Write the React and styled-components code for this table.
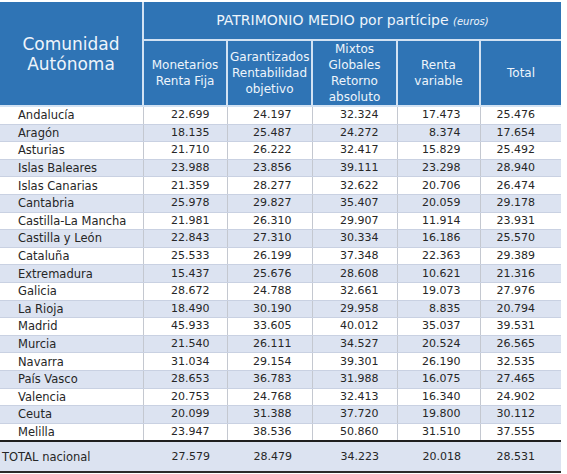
import styled, { createGlobalStyle } from "styled-components";

const GlobalStyle = createGlobalStyle`
  body {
    margin: 0;
    background: #ffffff;
    font-family: "DejaVu Sans", "Liberation Sans", sans-serif;
  }
`;

const Page = styled.div`
  padding-top: 2px;
`;

const Table = styled.table`
  width: 561px;
  table-layout: fixed;
  border-collapse: collapse;
  color: #262626;
`;

const HeadCell = styled.th`
  background: #2f74b5;
  color: #eef4fb;
  font-weight: normal;
  text-align: center;
  vertical-align: middle;
  border: 2px solid #d2e2f3;
  border-top: none;
  font-size: ${(p) => p.$size || 12}px;
  line-height: ${(p) => p.$lh || 16}px;
  height: ${(p) => p.$h || "auto"};
  padding: 0 2px;

  &:first-child {
    border-left: none;
  }
  &:last-child {
    border-right: none;
  }
`;

const Units = styled.span`
  font-style: italic;
  font-size: 10px;
`;

const Row = styled.tr`
  background: ${(p) => (p.$odd ? "#dce3f1" : "#ffffff")};
`;

const NameCell = styled.td`
  height: 16.6px;
  padding: 0 0 0 18px;
  font-size: 11.5px;
  line-height: 14px;
  border-bottom: 1px solid #c9d1e2;
  border-right: 1px solid #c4c8d0;
  white-space: nowrap;
`;

const NumCell = styled.td`
  padding: 0 ${(p) => p.$pad || 18}px 0 0;
  text-align: right;
  font-size: 11px;
  line-height: 14px;
  border-bottom: 1px solid #c9d1e2;
  border-right: 1px solid #c4c8d0;

  &:last-child {
    border-right: none;
  }
`;

const TotalRow = styled.tr`
  background: #dce3f1;

  td {
    height: 27px;
    border-top: 2px solid #1f1f1f;
    border-bottom: 2px solid #2b2b2b;
    border-right: none;
  }
`;

const TotalName = styled.td`
  padding-left: 2px;
  font-size: 11.5px;
  white-space: nowrap;
`;

const pads = [17, 20, 18, 19, 26];

const rows = [
  ["Andalucía", "22.699", "24.197", "32.324", "17.473", "25.476"],
  ["Aragón", "18.135", "25.487", "24.272", "8.374", "17.654"],
  ["Asturias", "21.710", "26.222", "32.417", "15.829", "25.492"],
  ["Islas Baleares", "23.988", "23.856", "39.111", "23.298", "28.940"],
  ["Islas Canarias", "21.359", "28.277", "32.622", "20.706", "26.474"],
  ["Cantabria", "25.978", "29.827", "35.407", "20.059", "29.178"],
  ["Castilla-La Mancha", "21.981", "26.310", "29.907", "11.914", "23.931"],
  ["Castilla y León", "22.843", "27.310", "30.334", "16.186", "25.570"],
  ["Cataluña", "25.533", "26.199", "37.348", "22.363", "29.389"],
  ["Extremadura", "15.437", "25.676", "28.608", "10.621", "21.316"],
  ["Galicia", "28.672", "24.788", "32.661", "19.073", "27.976"],
  ["La Rioja", "18.490", "30.190", "29.958", "8.835", "20.794"],
  ["Madrid", "45.933", "33.605", "40.012", "35.037", "39.531"],
  ["Murcia", "21.540", "26.111", "34.527", "20.524", "26.565"],
  ["Navarra", "31.034", "29.154", "39.301", "26.190", "32.535"],
  ["País Vasco", "28.653", "36.783", "31.988", "16.075", "27.465"],
  ["Valencia", "20.753", "24.768", "32.413", "16.340", "24.902"],
  ["Ceuta", "20.099", "31.388", "37.720", "19.800", "30.112"],
  ["Melilla", "23.947", "38.536", "50.860", "31.510", "37.555"],
];

const total = ["TOTAL nacional", "27.579", "28.479", "34.223", "20.018", "28.531"];

const App = () => {
  return (
    <Page>
      <GlobalStyle />
      <Table>
        <colgroup>
          <col style={{ width: 143 }} />
          <col style={{ width: 84 }} />
          <col style={{ width: 85 }} />
          <col style={{ width: 85 }} />
          <col style={{ width: 83 }} />
          <col style={{ width: 81 }} />
        </colgroup>
        <thead>
          <tr>
            <HeadCell rowSpan={2} $size={17} $lh={20}>
              Comunidad
              <br />
              Autónoma
            </HeadCell>
            <HeadCell colSpan={5} $size={14} $h="37px">
              PATRIMONIO MEDIO por partícipe <Units>(euros)</Units>
            </HeadCell>
          </tr>
          <tr>
            <HeadCell $h="62px">
              Monetarios
              <br />
              Renta Fija
            </HeadCell>
            <HeadCell>
              Garantizados
              <br />
              Rentabilidad
              <br />
              objetivo
            </HeadCell>
            <HeadCell>
              Mixtos
              <br />
              Globales
              <br />
              Retorno
              <br />
              absoluto
            </HeadCell>
            <HeadCell>
              Renta
              <br />
              variable
            </HeadCell>
            <HeadCell>Total</HeadCell>
          </tr>
        </thead>
        <tbody>
          {rows.map((r, i) => (
            <Row key={r[0]} $odd={i % 2 === 1}>
              <NameCell>{r[0]}</NameCell>
              {r.slice(1).map((v, j) => (
                <NumCell key={j} $pad={pads[j]}>
                  {v}
                </NumCell>
              ))}
            </Row>
          ))}
          <TotalRow>
            <TotalName>{total[0]}</TotalName>
            {total.slice(1).map((v, j) => (
              <NumCell key={j} $pad={pads[j]}>
                {v}
              </NumCell>
            ))}
          </TotalRow>
        </tbody>
      </Table>
    </Page>
  );
};

export default App;
